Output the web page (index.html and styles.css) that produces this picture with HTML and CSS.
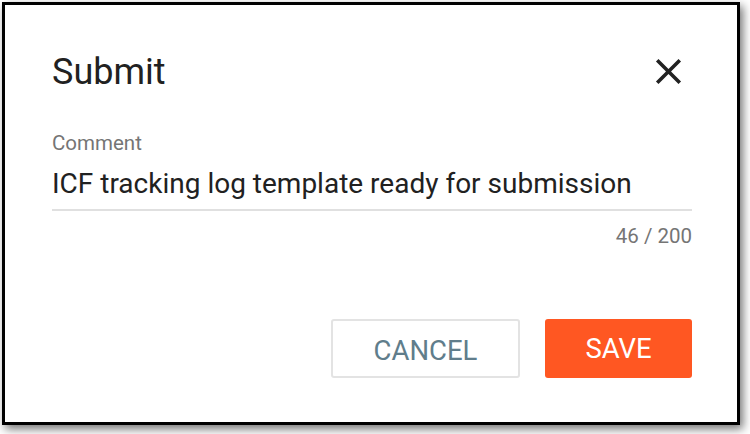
FILE: index.html
```html
<!DOCTYPE html>
<html lang="en">
<head>
<meta charset="utf-8">
<title>Submit</title>
<link rel="stylesheet" href="styles.css">
</head>
<body>
<div class="dialog">
  <div class="dialog-header">
    <h1 class="dialog-title">Submit</h1>
    <button class="close-btn" aria-label="Close">
      <svg class="close-icon" viewBox="0 0 24 24" width="43" height="43"><path d="M19 6.41L17.59 5 12 10.59 6.41 5 5 6.41 10.59 12 5 17.59 6.41 19 12 13.41 17.59 19 19 17.59 13.41 12z" fill="#222"/></svg>
    </button>
  </div>
  <div class="field">
    <label class="field-label">Comment</label>
    <div class="field-input">ICF tracking log template ready for submission</div>
    <div class="field-counter">46 / 200</div>
  </div>
  <div class="dialog-actions">
    <button class="btn btn-cancel">CANCEL</button>
    <button class="btn btn-save">SAVE</button>
  </div>
</div>
</body>
</html>
```
FILE: styles.css
```css
html, body {
  margin: 0;
  padding: 0;
  background: #ffffff;
}
body {
  font-family: Roboto, "Liberation Sans", sans-serif;
  width: 750px;
  height: 434px;
  overflow: hidden;
}
.dialog {
  box-sizing: border-box;
  margin: 2px 0 0 2px;
  width: 738px;
  height: 423px;
  border: 3px solid #000;
  background: #fff;
  box-shadow: 3px 4px 9px rgba(0, 0, 0, 0.55);
  padding: 45px 45px 44px 47px;
  display: flex;
  flex-direction: column;
}
.dialog-header {
  display: flex;
  align-items: center;
  justify-content: space-between;
  height: 43px;
}
.dialog-title {
  margin: 0;
  font-size: 36px;
  line-height: 36px;
  font-weight: 400;
  color: #212121;
}
.close-btn {
  border: 0;
  background: transparent;
  padding: 0;
  margin-right: 2px;
  width: 43px;
  height: 43px;
  display: flex;
}
.close-icon {
  display: block;
}
.field {
  display: flex;
  flex-direction: column;
  margin-top: 40px;
}
.field-label {
  font-size: 20.5px;
  line-height: 20px;
  color: #757575;
}
.field-input {
  margin-top: 17px;
  font-size: 28px;
  line-height: 28px;
  color: #212121;
  padding-bottom: 11px;
  border-bottom: 2px solid #e0e0e0;
}
.field-counter {
  margin-top: 15px;
  align-self: flex-end;
  font-size: 20.5px;
  line-height: 20px;
  color: #757575;
}
.dialog-actions {
  margin-top: auto;
  display: flex;
  justify-content: flex-end;
  gap: 25px;
}
.btn {
  box-sizing: border-box;
  height: 59px;
  font-family: Roboto, "Liberation Sans", sans-serif;
  font-size: 27.5px;
  font-weight: 400;
  border-radius: 3px;
  display: flex;
  align-items: center;
  justify-content: center;
  padding: 0;
  cursor: pointer;
}
.btn-cancel {
  width: 189px;
  background: #fff;
  border: 2px solid #e3e3e3;
  color: #607d8b;
  padding-top: 3px;
}
.btn-save {
  width: 147px;
  background: #ff5722;
  border: 0;
  color: #fff;
}
```
